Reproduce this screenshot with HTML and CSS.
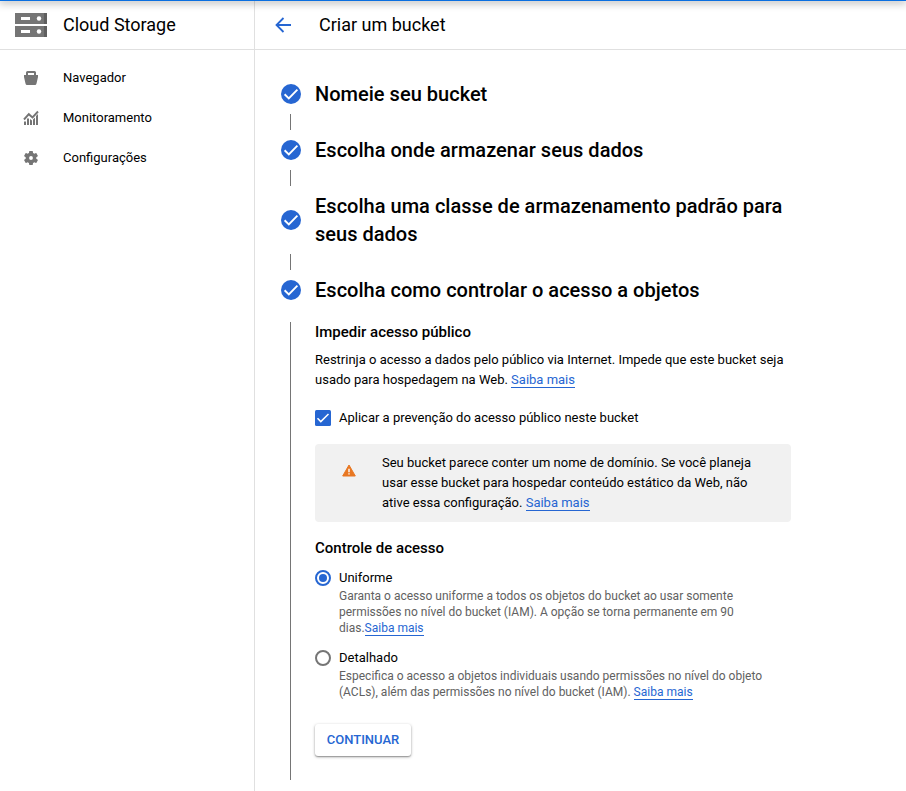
FILE: index.html
```html
<!DOCTYPE html>
<html lang="pt-BR">
<head>
<meta charset="utf-8">
<title>Criar um bucket</title>
<link rel="stylesheet" href="styles.css">
</head>
<body>
<svg class="defs" width="0" height="0" aria-hidden="true">
  <symbol id="done" viewBox="0 0 20 20">
    <circle cx="10" cy="10" r="10" fill="#2666d2"/>
    <path d="M3.600 10.300l4.200 4.100 8.600-8.800" fill="none" stroke="#fff" stroke-width="1.900"/>
  </symbol>
</svg>
<div class="app">
  <aside class="sidebar">
    <header class="bar product">
      <svg width="32" height="24" viewBox="0 0 32 24" shape-rendering="crispEdges">
        <path fill="#757575" d="M0 0h32v11H0zM0 13h32v11H0z"/>
        <path fill="#5f5f5f" d="M29 0h3v11h-3zM29 13h3v11h-3z"/>
        <path fill="#fff" d="M6 4h9v3H6zM6 17h9v3H6z"/>
        <g fill="#fff" shape-rendering="auto"><circle cx="24" cy="5.500" r="2.200"/><circle cx="24" cy="18.500" r="2.200"/></g>
      </svg>
      <span>Cloud Storage</span>
    </header>
    <nav class="nav">
      <a class="nav-item">
        <svg width="16" height="16" viewBox="0 0 16 16"><path fill="#757575" fill-rule="evenodd" d="M1 5h2V2.500Q3 1 4.500 1h7Q13 1 13 2.500V5h2v2l-1.500 6.500q-.3 1.500-1.500 1.500H4q-1.200 0-1.500-1.500L1 7zM5 3v2h6V3z"/></svg>
        <span>Navegador</span>
      </a>
      <a class="nav-item">
        <svg width="16" height="16" viewBox="0 0 16 16"><path fill="#757575" d="M1 11.500h2V15H1zM4 8.500h2V15H4zM7 9l2 1.500V15H7zM10 9.500l2-2V15h-2zM13 6l2-2v11h-2z"/><path d="M1 9.500l4.800-5.300 3.700 3.300L15 1.500" fill="none" stroke="#757575" stroke-width="1.900"/></svg>
        <span>Monitoramento</span>
      </a>
      <a class="nav-item">
        <svg width="16" height="16" viewBox="0.700 0.700 22.600 22.600"><path fill="#757575" d="M19.430 12.980c.04-.32.070-.64.070-.98s-.03-.66-.07-.98l2.110-1.650c.19-.15.240-.42.120-.64l-2-3.460c-.12-.22-.39-.3-.61-.22l-2.490 1c-.52-.4-1.080-.73-1.690-.98l-.38-2.650C14.460 2.180 14.250 2 14 2h-4c-.25 0-.46.180-.49.420l-.38 2.650c-.61.250-1.170.59-1.690.98l-2.490-1c-.23-.09-.49 0-.61.220l-2 3.460c-.13.220-.07.490.12.640l2.110 1.650c-.04.320-.07.650-.07.980s.03.660.07.980l-2.110 1.650c-.19.150-.24.420-.12.640l2 3.460c.12.220.39.300.61.220l2.490-1c.52.400 1.080.730 1.690.980l.38 2.650c.03.240.24.420.49.420h4c.25 0 .46-.18.490-.42l.38-2.650c.61-.25 1.170-.59 1.690-.98l2.490 1c.23.090.49 0 .61-.22l2-3.460c.12-.22.070-.49-.12-.64zM12 14.700a2.700 2.700 0 1 1 0-5.400 2.700 2.700 0 0 1 0 5.400z"/></svg>
        <span>Configurações</span>
      </a>
    </nav>
  </aside>
  <main class="main">
    <header class="bar page-bar">
      <svg width="16" height="16" viewBox="0 0 16 16"><path d="M16 8H1.500M8.500 1L1.500 8l7 7" fill="none" stroke="#2666d2" stroke-width="1.800"/></svg>
      <span>Criar um bucket</span>
    </header>
    <div class="stepper">
      <div class="step"><svg width="20" height="20"><use href="#done"/></svg><h2>Nomeie seu bucket</h2></div>
      <div class="link-line"></div>
      <div class="step"><svg width="20" height="20"><use href="#done"/></svg><h2>Escolha onde armazenar seus dados</h2></div>
      <div class="link-line"></div>
      <div class="step"><svg width="20" height="20"><use href="#done"/></svg><h2>Escolha uma classe de armazenamento padrão para seus dados</h2></div>
      <div class="link-line"></div>
      <div class="step"><svg width="20" height="20"><use href="#done"/></svg><h2>Escolha como controlar o acesso a objetos</h2></div>
      <section class="content">
        <h3>Impedir acesso público</h3>
        <p class="intro">Restrinja o acesso a dados pelo público via Internet. Impede que este bucket seja usado para hospedagem na Web. <a class="more">Saiba mais</a></p>
        <div class="option">
          <svg width="16" height="16" viewBox="0 0 16 16"><rect width="16" height="16" rx="1.500" fill="#2666d2"/><path d="M2.500 8.300l3.300 3.300 7.700-7.600" fill="none" stroke="#fff" stroke-width="1.500"/></svg>
          <span>Aplicar a prevenção do acesso público neste bucket</span>
        </div>
        <div class="notice">
          <svg width="14" height="13" viewBox="0 0 14 13"><path fill="#e87722" stroke="#e87722" stroke-linejoin="round" d="M7 1L13.300 12H.7z"/><path fill="#fff" d="M6.300 4.800h1.400v3.400H6.300zM6.300 9.200h1.400v1.400H6.300z"/></svg>
          <p>Seu bucket parece conter um nome de domínio. Se você planeja usar esse bucket para hospedar conteúdo estático da Web, não ative essa configuração. <a class="more">Saiba mais</a></p>
        </div>
        <h3>Controle de acesso</h3>
        <div class="option first">
          <svg width="16" height="16" viewBox="0 0 16 16"><circle cx="8" cy="8" r="7" fill="none" stroke="#2666d2" stroke-width="2"/><circle cx="8" cy="8" r="4" fill="#2666d2"/></svg>
          <span>Uniforme</span>
        </div>
        <p class="hint">Garanta o acesso uniforme a todos os objetos do bucket ao usar somente permissões no nível do bucket (IAM). A opção se torna permanente em 90 dias.<a class="more">Saiba mais</a></p>
        <div class="option second">
          <svg width="16" height="16" viewBox="0 0 16 16"><circle cx="8" cy="8" r="7" fill="none" stroke="#757575" stroke-width="2"/></svg>
          <span>Detalhado</span>
        </div>
        <p class="hint">Especifica o acesso a objetos individuais usando permissões no nível do objeto (ACLs), além das permissões no nível do bucket (IAM). <a class="more">Saiba mais</a></p>
        <button class="continue">CONTINUAR</button>
      </section>
    </div>
  </main>
</div>
</body>
</html>
```
FILE: styles.css
```css
* { box-sizing: border-box; }
body {
  margin: 0;
  font: 13px/20px Roboto, sans-serif;
  color: #000;
  background: #fff;
  overflow: hidden;
}
body::before {
  content: "";
  position: absolute;
  inset: 0 0 auto;
  height: 1px;
  background: #0b6fe0;
  box-shadow: 0 0 8px 1px rgba(0, 0, 0, .55);
}
h2, h3, p { margin: 0; }
svg { display: block; flex: none; }
.defs { position: absolute; }
.app { display: flex; height: 791px; }
.sidebar { width: 255px; flex: none; border-right: 1px solid #e0e0e0; }
.main { flex: 1; }
.bar {
  display: flex;
  align-items: center;
  height: 50px;
  border-bottom: 1px solid #e0e0e0;
  font-size: 18px;
  line-height: 24px;
}
.product { gap: 16px; padding-left: 15px; padding-top: 1px; }
.page-bar { gap: 28px; padding-left: 20px; padding-top: 1px; }
.nav { padding-top: 8px; }
.nav-item {
  display: grid;
  grid-template-columns: 62px 1fr;
  column-gap: 1px;
  align-items: center;
  height: 40px;
}
.nav-item svg { margin: 0 auto; }
.stepper { padding: 30px 0 0 26px; width: 536px; }
.step { display: flex; align-items: center; gap: 14px; }
.step h2 { font-size: 20px; line-height: 28px; font-weight: 500; letter-spacing: .02px; }
.link-line { width: 1px; height: 16px; margin: 6px 9px; background: #757575; }
.content {
  margin: 18px 0 0 9px;
  height: 458px;
  border-left: 1px solid #757575;
  padding-left: 24px;
}
h3 { font-size: 15px; line-height: 20px; font-weight: 500; }
.intro { margin-top: 8px; width: 476px; }
.more { color: #2666d2; border-bottom: 1px solid #2666d2; }
.option { display: flex; align-items: center; gap: 8px; margin-top: 18px; height: 20px; }
.notice {
  display: flex;
  gap: 26px;
  width: 476px;
  height: 78px;
  margin: 16px 0;
  padding: 9px 30px 9px 27px;
  border-radius: 4px;
  background: #f1f1f1;
}
.notice svg { margin: 10.500px 0 0; }
.notice p { width: 376px; }
.option.first { margin-top: 10px; }
.option.second { margin-top: 12px; }
.hint { margin-left: 24px; width: 430px; font-size: 12px; line-height: 16px; color: #616161; }
.continue {
  display: block;
  width: 96px;
  height: 32px;
  margin-top: 24px;
  padding: 0;
  border: 0;
  border-radius: 3px;
  background: #fff;
  box-shadow: 0 1px 3px rgba(0, 0, 0, .35), 0 1px 1px rgba(0, 0, 0, .2);
  font: 500 13px/32px Roboto, sans-serif;
  color: #2666d2;
}
```
